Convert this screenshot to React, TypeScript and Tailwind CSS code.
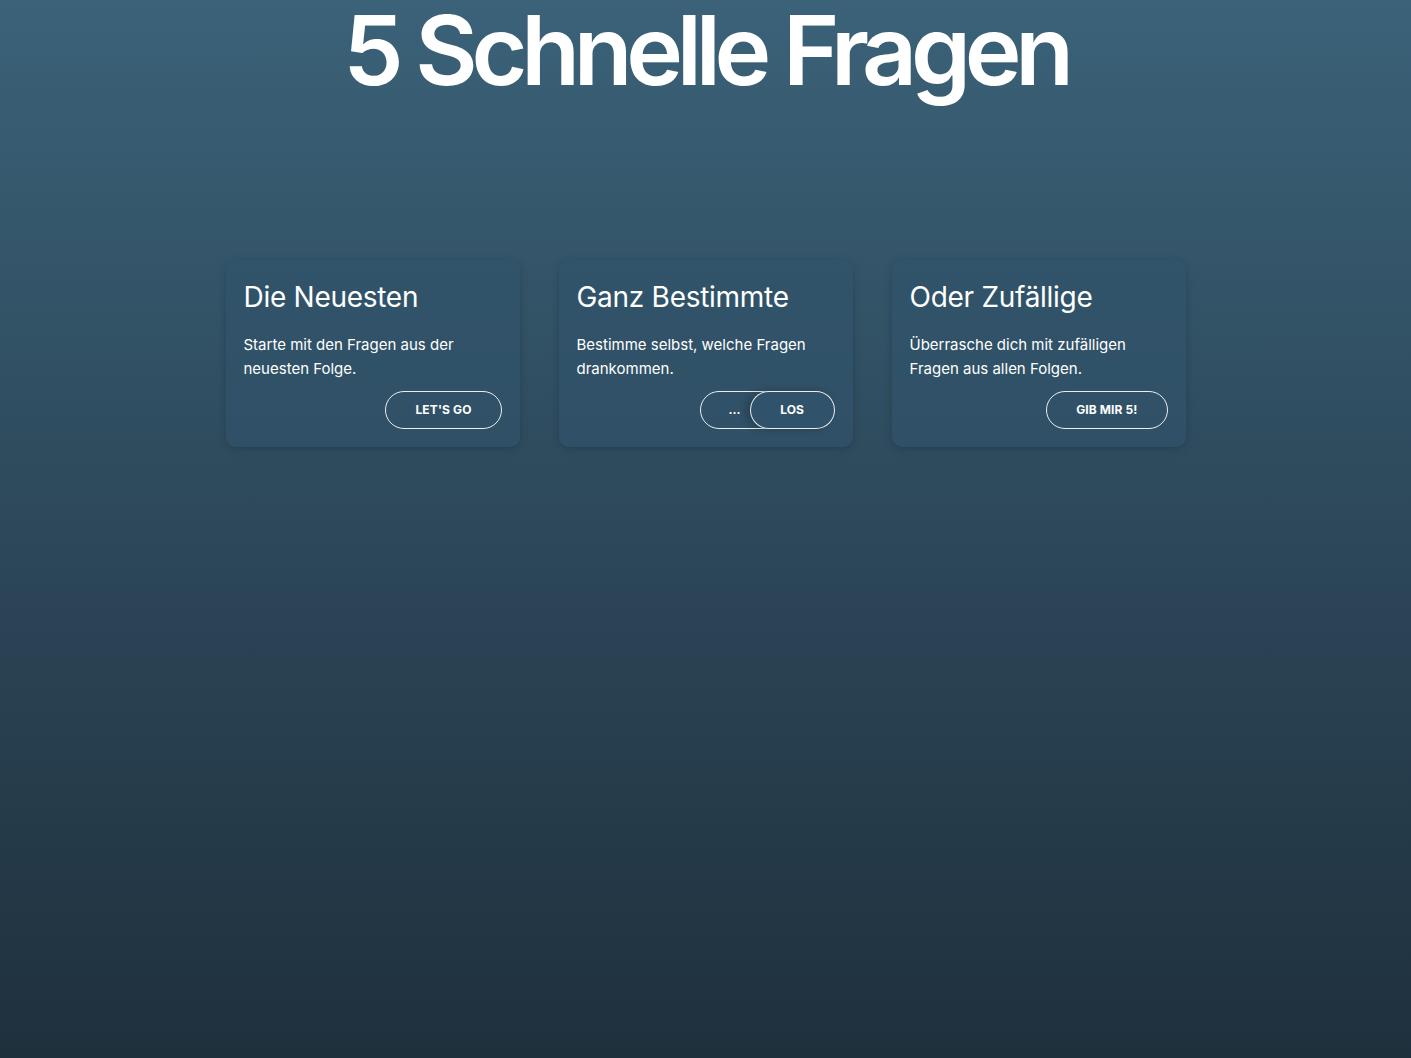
import React from "react";

function Card({ title, text, children }: { title: string; text: string; children: React.ReactNode }) {
  return (
    <div className="flex flex-col rounded-[10px] bg-[#31536a]/60 px-[18px] pt-[20px] pb-[18px] shadow-[0_2px_8px_rgba(0,0,0,0.18)]">
      <h2 className="text-[28px] leading-[34px] font-normal tracking-[-0.01em] text-white">{title}</h2>
      <p className="mt-[19px] text-[15px] leading-[24px] text-white">{text}</p>
      <div className="mt-[10px] flex justify-end">{children}</div>
    </div>
  );
}

const btn =
  "h-[38px] rounded-full border border-white/90 px-[29px] text-[12px] font-bold uppercase tracking-[0.01em] text-white";

export default function App() {
  return (
    <div
      className="flex min-h-[1058px] w-full flex-col bg-gradient-to-b from-[#3b6279] to-[#1f303d]"
      style={{ fontFamily: "Inter, 'Noto Sans', sans-serif" }}
    >
      <h1 className="text-center text-[96px] leading-[100px] font-semibold tracking-[-0.065em] text-white">
        5 Schnelle Fragen
      </h1>
      <div className="mx-auto mt-[160px] grid w-[960px] grid-cols-3 gap-[39px]">
        <Card title="Die Neuesten" text="Starte mit den Fragen aus der neuesten Folge.">
          <button className={btn}>Let's go</button>
        </Card>
        <Card title="Ganz Bestimmte" text="Bestimme selbst, welche Fragen drankommen.">
          <div className="flex">
            <button className="h-[38px] w-[80px] rounded-full border border-white/90 pr-[10px] text-[12px] font-bold text-white">
              ...
            </button>
            <button className="-ml-[30px] h-[38px] w-[85px] rounded-full border border-white/90 bg-[#30526a] text-[12px] font-bold uppercase text-white shadow-[-4px_0_8px_rgba(0,0,0,0.2)]">
              Los
            </button>
          </div>
        </Card>
        <Card title="Oder Zufällige" text="Überrasche dich mit zufälligen Fragen aus allen Folgen.">
          <button className={btn}>Gib mir 5!</button>
        </Card>
      </div>
    </div>
  );
}
